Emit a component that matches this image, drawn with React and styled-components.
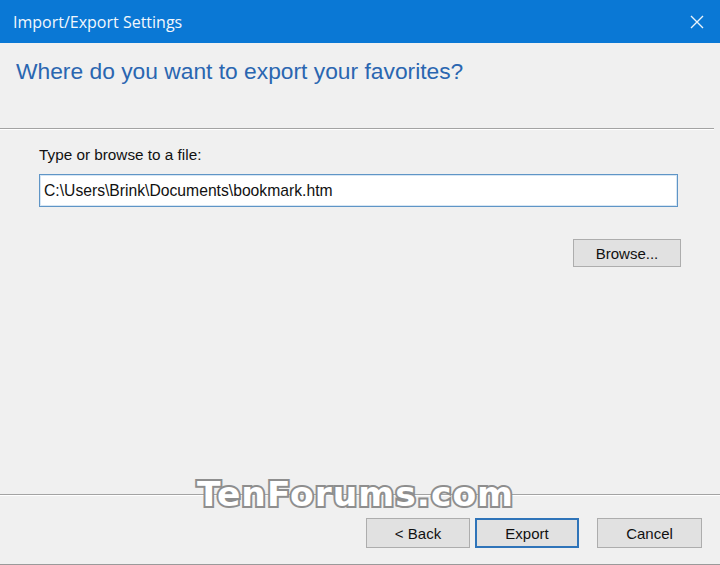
import React from "react";
import styled, { createGlobalStyle } from "styled-components";

const GlobalStyle = createGlobalStyle`
  html, body { margin: 0; padding: 0; background: #f0f0f0; }
  * { box-sizing: border-box; }
`;

const Window = styled.div`
  width: 720px;
  height: 565px;
  display: flex;
  flex-direction: column;
  background: #f0f0f0;
  font-family: "Liberation Sans", Arial, sans-serif;
  overflow: hidden;
  border-bottom: 1px solid #9a9a9a;
`;

const TitleBar = styled.div`
  height: 43px;
  flex: 0 0 43px;
  background: #0a78d5;
  display: flex;
  align-items: center;
  justify-content: space-between;
  padding-left: 13px;
`;

const Title = styled.span`
  font-family: "Open Sans", "Noto Sans", sans-serif;
  font-size: 16px;
  color: #f2f7fc;
`;

const CloseButton = styled.div`
  width: 46px;
  height: 43px;
  display: flex;
  align-items: center;
  justify-content: center;
`;

const Header = styled.div`
  height: 86px;
  flex: 0 0 86px;
  padding: 15px 16px 0;
  border-bottom: 1px solid #a3a3a3;
  box-shadow: 0 1px 0 #ffffff;
  margin-right: 6px;
`;

const Heading = styled.h1`
  margin: 0;
  font-weight: normal;
  font-size: 22.8px;
  line-height: 26px;
  color: #2a66b0;
`;

const Body = styled.div`
  flex: 1;
  display: flex;
  flex-direction: column;
  padding: 17px 39px 0 39px;
`;

const Label = styled.label`
  font-size: 15.3px;
  line-height: 18px;
  color: #111;
`;

const TextInput = styled.input`
  margin-top: 10px;
  width: 639px;
  height: 33px;
  border: 1px solid #5f95c6;
  box-shadow: inset 0 0 0 1px #d6e6f4;
  background: #ffffff;
  padding: 0 4px;
  font-family: "Liberation Sans", Arial, sans-serif;
  font-size: 15.7px;
  color: #111;
  outline: none;
`;

const Button = styled.button`
  width: ${(p) => p.$w || 105}px;
  height: ${(p) => p.$h || 30}px;
  margin-left: ${(p) => p.$ml || 0}px;
  background: #e1e1e1;
  border: ${(p) => (p.$primary ? "2px solid #2f74b9" : "1px solid #adadad")};
  font-family: "Liberation Sans", Arial, sans-serif;
  font-size: 15px;
  color: #111;
  padding: 0;
  cursor: default;
`;

const BrowseRow = styled.div`
  display: flex;
  justify-content: flex-end;
  margin-top: 32px;
`;

const Footer = styled.div`
  position: relative;
  flex: 0 0 70px;
  border-top: 1px solid #a3a3a3;
  box-shadow: inset 0 1px 0 #ffffff;
`;

const ButtonRow = styled.div`
  display: flex;
  justify-content: flex-end;
  padding: 23px 18px 0 0;
`;

const Watermark = styled.div`
  position: absolute;
  left: 197px;
  top: -20px;
  font-family: "DejaVu Sans", sans-serif;
  font-weight: bold;
  font-size: 34.5px;
  line-height: 38px;
  color: #ffffff;
  -webkit-text-stroke: 4px #8e8e8e;
  paint-order: stroke fill;
  letter-spacing: 1px;
  pointer-events: none;
`;

export default function App() {
  return (
    <>
      <GlobalStyle />
      <Window>
        <TitleBar>
          <Title>Import/Export Settings</Title>
          <CloseButton>
            <svg width="14" height="14" viewBox="0 0 14 14">
              <path d="M1 1 L13 13 M13 1 L1 13" stroke="#eaf3fb" strokeWidth="1.4" fill="none" />
            </svg>
          </CloseButton>
        </TitleBar>
        <Header>
          <Heading>Where do you want to export your favorites?</Heading>
        </Header>
        <Body>
          <Label>Type or browse to a file:</Label>
          <TextInput defaultValue="C:\Users\Brink\Documents\bookmark.htm" />
          <BrowseRow>
            <Button $w={108} $h={28}>Browse...</Button>
          </BrowseRow>
        </Body>
        <Footer>
          <Watermark>TenForums.com</Watermark>
          <ButtonRow>
            <Button $w={104}>&lt; Back</Button>
            <Button $w={104} $ml={5} $primary>Export</Button>
            <Button $w={105} $ml={18}>Cancel</Button>
          </ButtonRow>
        </Footer>
      </Window>
    </>
  );
}
